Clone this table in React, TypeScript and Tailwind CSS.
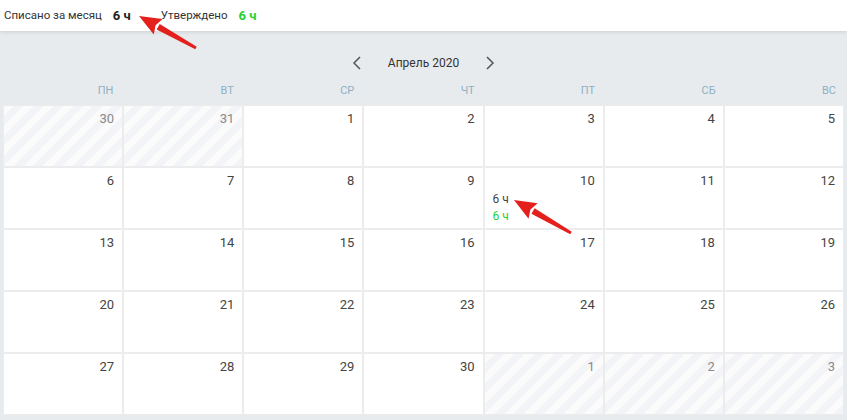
import React from "react";

type Cell = { d: number; other?: boolean; hours?: boolean };

const rows: Cell[][] = [
  [{ d: 30, other: true }, { d: 31, other: true }, { d: 1 }, { d: 2 }, { d: 3 }, { d: 4 }, { d: 5 }],
  [{ d: 6 }, { d: 7 }, { d: 8 }, { d: 9 }, { d: 10, hours: true }, { d: 11 }, { d: 12 }],
  [{ d: 13 }, { d: 14 }, { d: 15 }, { d: 16 }, { d: 17 }, { d: 18 }, { d: 19 }],
  [{ d: 20 }, { d: 21 }, { d: 22 }, { d: 23 }, { d: 24 }, { d: 25 }, { d: 26 }],
  [{ d: 27 }, { d: 28 }, { d: 29 }, { d: 30 }, { d: 1, other: true }, { d: 2, other: true }, { d: 3, other: true }],
];

const days = ["пн", "вт", "ср", "чт", "пт", "сб", "вс"];

function Arrow({ x1, y1, x2, y2 }: { x1: number; y1: number; x2: number; y2: number }) {
  const ang = Math.atan2(y2 - y1, x2 - x1);
  const len = 22;
  const w = 9;
  const bx = x2 - Math.cos(ang) * len;
  const by = y2 - Math.sin(ang) * len;
  const px = -Math.sin(ang);
  const py = Math.cos(ang);
  return (
    <g>
      <path
        d={`M${x1 + px * 1.5} ${y1 + py * 1.5} L${bx + px * 3.2} ${by + py * 3.2} L${bx - px * 3.2} ${by - py * 3.2} L${x1 - px * 1.5} ${y1 - py * 1.5} Z`}
        fill="#e3201b"
      />
      <path d={`M${x2} ${y2} L${bx + px * w} ${by + py * w} L${bx + Math.cos(ang) * 3} ${by + Math.sin(ang) * 3} L${bx - px * w} ${by - py * w} Z`} fill="#e3201b" />
    </g>
  );
}

export default function App() {
  return (
    <div className="relative w-[847px] h-[420px] overflow-hidden bg-[#e8ebee] font-['Roboto',sans-serif]">
      <div className="relative z-10 h-[31px] bg-white flex items-center pl-[4px] text-[11.5px] text-[#333] shadow-[0_1px_4px_rgba(0,0,0,0.12)]">
        <span>Списано за месяц</span>
        <span className="ml-[11px] text-[13px] font-bold text-[#222]">6 ч</span>
        <span className="ml-[30px]">Утверждено</span>
        <span className="ml-[11px] text-[13px] font-bold text-[#1fd231]">6 ч</span>
      </div>
      <div className="h-[30px] mt-[17px] flex items-center justify-center gap-[24px] text-[12px] text-[#333]">
        <svg width="10" height="14" viewBox="0 0 10 14" className="mr-[2px]">
          <path d="M8 1 L2 7 L8 13" fill="none" stroke="#555" strokeWidth="1.5" />
        </svg>
        <span>Апрель 2020</span>
        <svg width="10" height="14" viewBox="0 0 10 14" className="ml-[2px]">
          <path d="M2 1 L8 7 L2 13" fill="none" stroke="#555" strokeWidth="1.5" />
        </svg>
      </div>
      <div className="grid grid-cols-7 gap-[2px] px-[3px] h-[27px] items-center">
        {days.map((d) => (
          <div key={d} className="text-right pr-[8px] text-[11px] uppercase text-[#8fb0c2]">
            {d}
          </div>
        ))}
      </div>
      <div className="grid grid-cols-7 gap-[2px] mx-[3px] bg-[#ececec] border border-[#ececec]">
        {rows.flat().map((c, i) => (
          <div
            key={i}
            className={
              "h-[60px] pt-[5px] pr-[8px] pl-[8px] text-[13px] " +
              (c.other
                ? "bg-[repeating-linear-gradient(-45deg,#f3f4f7_0px,#f3f4f7_7px,#fbfbfc_7px,#fbfbfc_14px)] text-[#8a8a8a]"
                : "bg-white text-[#444]")
            }
          >
            <div className="text-right leading-[16px]">{c.d}</div>
            {c.hours && (
              <div className="mt-[2px] text-[12px] leading-[17px]">
                <div className="text-[#444]">6 ч</div>
                <div className="text-[#21d22f]">6 ч</div>
              </div>
            )}
          </div>
        ))}
      </div>
      <svg className="absolute inset-0 z-20 pointer-events-none" width="847" height="420">
        <Arrow x1={196} y1={48} x2={139} y2={16} />
        <Arrow x1={571} y1={233} x2={514} y2={200} />
      </svg>
    </div>
  );
}
